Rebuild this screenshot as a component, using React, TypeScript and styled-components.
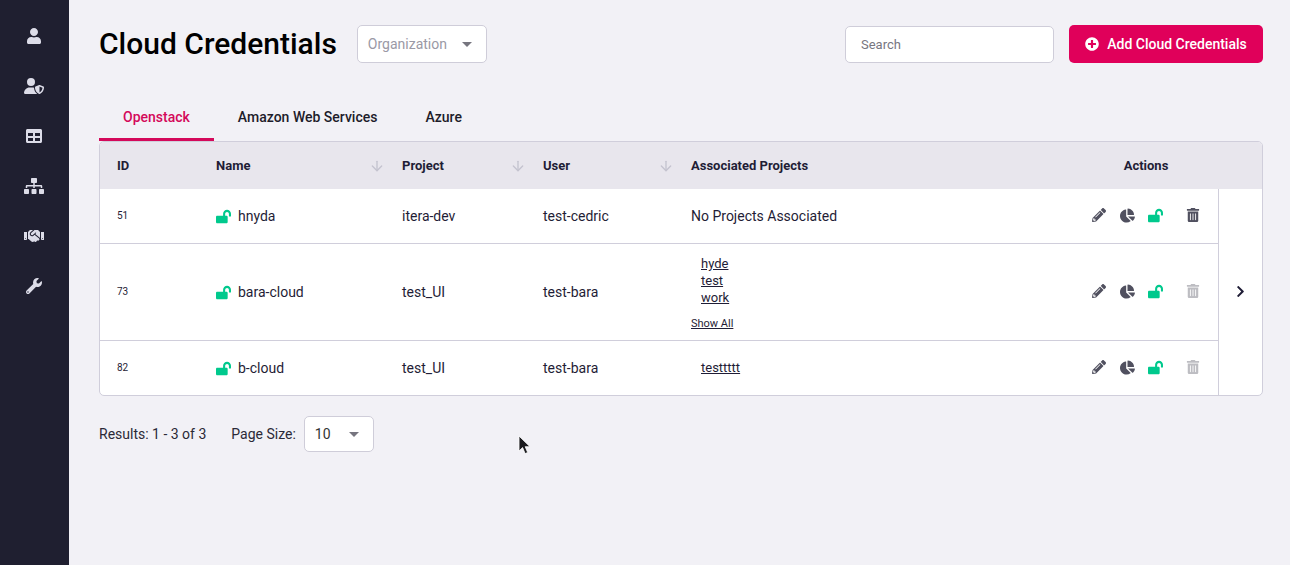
import styled, { createGlobalStyle } from "styled-components";
import {
  FaChartPie,
  FaChevronRight,
  FaHandshake,
  FaLockOpen,
  FaPencilAlt,
  FaPlusCircle,
  FaSitemap,
  FaTable,
  FaTrashAlt,
  FaUser,
  FaWrench,
} from "react-icons/fa";
import { FaUserShield } from "react-icons/fa6";
import { ArrowDown } from "lucide-react";

const GlobalStyle = createGlobalStyle`
  * {
    box-sizing: border-box;
  }

  body {
    margin: 0;
    background-color: #f2f1f6;
    color: #1f1d36;
    font-family: Roboto, "Liberation Sans", sans-serif;
    overflow: hidden;
  }
`;

const columns = "99px 186px 141px 148px 400px 144px 44px";

const navIcons = [
  { key: "user", size: 16, icon: <FaUser /> },
  { key: "shield", size: 20, icon: <FaUserShield /> },
  { key: "table", size: 16, icon: <FaTable /> },
  { key: "sitemap", size: 20, icon: <FaSitemap /> },
  { key: "handshake", size: 20, icon: <FaHandshake /> },
  { key: "wrench", size: 16, icon: <FaWrench /> },
];

const credentials = [
  { id: 51, name: "hnyda", project: "itera-dev", user: "test-cedric", projects: [], height: 54, canDelete: true },
  { id: 73, name: "bara-cloud", project: "test_UI", user: "test-bara", projects: ["hyde", "test", "work"], showAll: true, height: 96, canDelete: false },
  { id: 82, name: "b-cloud", project: "test_UI", user: "test-bara", projects: ["testtttt"], height: 54, canDelete: false },
];

export default function App() {
  return (
    <>
      <GlobalStyle />
      <Page>
        <Sidebar>
          {navIcons.map((item) => (
            <NavItem key={item.key} $size={item.size}>
              {item.icon}
            </NavItem>
          ))}
        </Sidebar>
        <Main>
          <TopBar>
            <Title>Cloud Credentials</Title>
            <Select $width={130} $height={38}>
              <Placeholder>Organization</Placeholder>
              <Caret />
            </Select>
            <Spacer />
            <SearchBox placeholder="Search" />
            <AddButton>
              <FaPlusCircle />
              Add Cloud Credentials
            </AddButton>
          </TopBar>
          <Tabs>
            <Tab $active>Openstack</Tab>
            <Tab>Amazon Web Services</Tab>
            <Tab>Azure</Tab>
          </Tabs>
          <Table>
            <HeaderRow>
              <HeaderCell>ID</HeaderCell>
              <HeaderCell>
                Name
                <SortArrow />
              </HeaderCell>
              <HeaderCell>
                Project
                <SortArrow />
              </HeaderCell>
              <HeaderCell>
                User
                <SortArrow />
              </HeaderCell>
              <HeaderCell>Associated Projects</HeaderCell>
              <ActionsHeader>Actions</ActionsHeader>
            </HeaderRow>
            <Body>
              <Rows>
                {credentials.map((row) => (
                  <Row key={row.id} $height={row.height}>
                    <IdCell>{row.id}</IdCell>
                    <Cell>
                      <LockIcon>
                        <FaLockOpen />
                      </LockIcon>
                      {row.name}
                    </Cell>
                    <Cell>{row.project}</Cell>
                    <Cell>{row.user}</Cell>
                    <Cell>
                      {row.projects.length === 0 ? (
                        "No Projects Associated"
                      ) : (
                        <ProjectList>
                          {row.projects.map((name) => (
                            <ProjectLink key={name}>{name}</ProjectLink>
                          ))}
                          {row.showAll && <ShowAll>Show All</ShowAll>}
                        </ProjectList>
                      )}
                    </Cell>
                    <Actions>
                      <ActionIcon $gap={14} $size={14}>
                        <FaPencilAlt />
                      </ActionIcon>
                      <ActionIcon $gap={13} $size={15}>
                        <FaChartPie />
                      </ActionIcon>
                      <ActionIcon $gap={22} $size={15} $color="#00c98d">
                        <FaLockOpen />
                      </ActionIcon>
                      <ActionIcon $gap={0} $size={14} $color={row.canDelete ? "#50505f" : "#bdbdc2"}>
                        <FaTrashAlt />
                      </ActionIcon>
                    </Actions>
                  </Row>
                ))}
              </Rows>
              <NextPanel>
                <FaChevronRight />
              </NextPanel>
            </Body>
          </Table>
          <Footer>
            <span>Results: 1 - 3 of 3</span>
            <PageSizeLabel>Page Size:</PageSizeLabel>
            <Select $width={70} $height={36}>
              <PageSizeValue>10</PageSizeValue>
              <Caret />
            </Select>
          </Footer>
        </Main>
        <Cursor viewBox="0 0 12 20">
          <path d="M1 1v15l3.6-3.4 2.5 6 2.6-1.1-2.5-5.8H12z" fill="#1b1b1f" stroke="#fff" strokeWidth="0.8" />
        </Cursor>
      </Page>
    </>
  );
}

const Page = styled.div`
  display: flex;
  height: 565px;
`;

const Sidebar = styled.nav`
  width: 69px;
  flex-shrink: 0;
  background-color: #1f1f30;
  padding: 11px 1px 0 0;
  display: flex;
  flex-direction: column;
`;

const NavItem = styled.div<{ $size: number }>`
  height: 50px;
  display: flex;
  align-items: center;
  justify-content: center;
  color: #dcdce8;
  font-size: ${(props) => props.$size}px;

  svg {
    display: block;
  }
`;

const Main = styled.main`
  flex: 1;
  padding: 25px 27px 0 30px;
  min-width: 0;
`;

const TopBar = styled.header`
  display: flex;
  align-items: center;
  height: 38px;
`;

const Title = styled.h1`
  margin: 0 20px 0 0;
  font-size: 30px;
  font-weight: 500;
  color: #000;
  line-height: 38px;
`;

const Select = styled.div<{ $width: number; $height: number }>`
  width: ${(props) => props.$width}px;
  height: ${(props) => props.$height}px;
  padding: 0 14px 0 10px;
  background-color: #fff;
  border: 1px solid #cfcdd9;
  border-radius: 5px;
  display: flex;
  align-items: center;
  justify-content: space-between;
`;

const Placeholder = styled.span`
  font-size: 14px;
  color: #9a99a5;
`;

const PageSizeValue = styled.span`
  font-size: 14px;
  color: #333;
`;

const Caret = styled.span`
  width: 0;
  height: 0;
  border-left: 5px solid transparent;
  border-right: 5px solid transparent;
  border-top: 5px solid #76757f;
`;

const Spacer = styled.div`
  flex: 1;
`;

const SearchBox = styled.input`
  width: 209px;
  height: 37px;
  margin-right: 15px;
  padding: 0 15px;
  background-color: #fff;
  border: 1px solid #cfcdd9;
  border-radius: 5px;
  font-family: inherit;
  font-size: 13px;

  &::placeholder {
    color: #77767f;
    opacity: 1;
  }
`;

const AddButton = styled.button`
  width: 194px;
  height: 38px;
  border: none;
  border-radius: 5px;
  background-color: #e0005a;
  color: #fff;
  font-family: inherit;
  font-size: 14px;
  font-weight: 500;
  display: flex;
  align-items: center;
  justify-content: center;
  gap: 8px;

  svg {
    font-size: 14px;
  }
`;

const Tabs = styled.div`
  display: flex;
  margin-top: 35px;
  height: 43px;
`;

const Tab = styled.div<{ $active?: boolean }>`
  padding: 0 24px;
  font-size: 14px;
  font-weight: 500;
  line-height: 38px;
  height: 43px;
  color: ${(props) => (props.$active ? "#d4095a" : "#1d1c2a")};
  border-bottom: 3px solid ${(props) => (props.$active ? "#d4095a" : "transparent")};
`;

const Table = styled.div`
  width: 1164px;
  border: 1px solid #d0cedb;
  border-radius: 5px;
  background-color: #fff;
  overflow: hidden;
`;

const HeaderRow = styled.div`
  display: grid;
  grid-template-columns: ${columns};
  height: 47px;
  background-color: #e8e6ed;
`;

const HeaderCell = styled.div`
  display: flex;
  align-items: center;
  justify-content: space-between;
  padding: 0 0 0 17px;
  font-size: 13px;
  font-weight: 700;
  color: #1f1d36;
`;

const ActionsHeader = styled(HeaderCell)`
  justify-content: center;
  padding: 0;
`;

const SortArrow = styled(ArrowDown).attrs({ size: 16, strokeWidth: 2 })`
  color: #c4c3cf;
`;

const Body = styled.div`
  display: flex;
`;

const Rows = styled.div`
  flex: 1;
`;

const Row = styled.div<{ $height: number }>`
  display: grid;
  grid-template-columns: 99px 186px 141px 148px 400px 144px;
  height: ${(props) => props.$height + 1}px;
  border-bottom: 1px solid #d0cedb;

  &:last-child {
    height: ${(props) => props.$height}px;
    border-bottom: none;
  }
`;

const Cell = styled.div`
  display: flex;
  align-items: center;
  padding-left: 17px;
  font-size: 14px;
  color: #1f1d36;
`;

const IdCell = styled(Cell)`
  font-size: 10px;
  padding-bottom: 2px;
`;

const LockIcon = styled.span`
  display: flex;
  margin: 1px 7px 0 0;
  color: #00c98d;
  font-size: 15px;
`;

const ProjectList = styled.div`
  display: flex;
  flex-direction: column;
  align-items: flex-start;
  padding-bottom: 1px;
`;

const ProjectLink = styled.a`
  margin-left: 10px;
  font-size: 13px;
  line-height: 17px;
  color: #1f1d36;
  text-decoration: underline;
`;

const ShowAll = styled.a`
  margin: 11px 0 -2px;
  font-size: 11px;
  line-height: 13px;
  color: #1f1d36;
  text-decoration: underline;
`;

const Actions = styled.div`
  display: flex;
  align-items: center;
  padding: 0 0 2px 17px;
`;

const ActionIcon = styled.span<{ $gap: number; $size: number; $color?: string }>`
  width: 15px;
  margin-right: ${(props) => props.$gap}px;
  display: flex;
  justify-content: center;
  color: ${(props) => props.$color ?? "#50505f"};
  font-size: ${(props) => props.$size}px;
`;

const NextPanel = styled.div`
  width: 44px;
  border-left: 1px solid #d0cedb;
  padding-bottom: 2px;
  display: flex;
  align-items: center;
  justify-content: center;
  color: #1f1d36;
  font-size: 13px;
`;

const Footer = styled.footer`
  display: flex;
  align-items: center;
  margin-top: 20px;
  font-size: 14px;
  color: #2b2937;
`;

const PageSizeLabel = styled.span`
  margin: 0 8px 0 25px;
`;

const Cursor = styled.svg`
  position: absolute;
  left: 518px;
  top: 435px;
  width: 12px;
  height: 20px;
`;
